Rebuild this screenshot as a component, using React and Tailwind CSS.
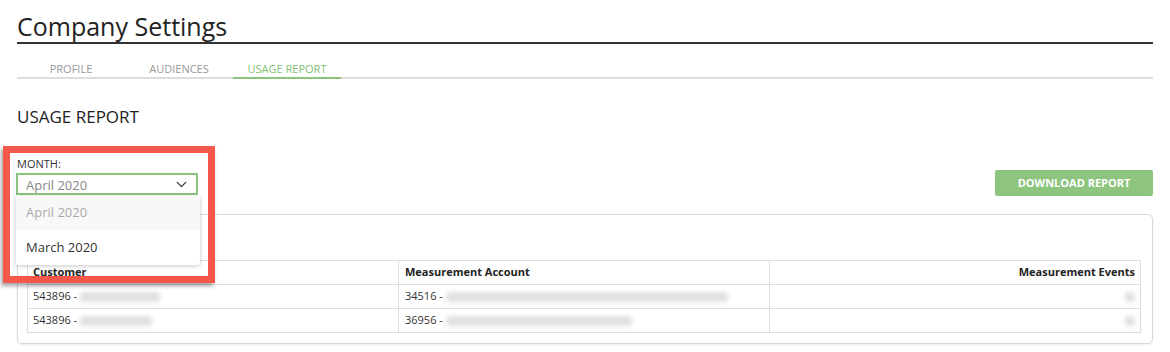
import React from 'react';
import { ChevronDown } from 'lucide-react';

const rows = [
  { customer: '543896 -', custBlur: 'w-[80px]', account: '34516 -', accBlur: 'w-[282px]' },
  { customer: '543896 -', custBlur: 'w-[72px]', account: '36956 -', accBlur: 'w-[186px]' },
];

function Blur({ className }) {
  return <span className={`inline-block h-[10px] align-middle rounded-sm bg-[#e0e0e0] blur-[2px] ${className}`} />;
}

export default function App() {
  const tabs = ['PROFILE', 'AUDIENCES', 'USAGE REPORT'];

  return (
    <div className="relative w-[1170px] h-[352px] bg-white px-[17px] pt-[11px] text-[#333] overflow-hidden" style={{ fontFamily: '"Open Sans", "Liberation Sans", sans-serif' }}>
      <h1 className="text-[25px] leading-[30px] text-[#222] border-b-2 border-[#333] pb-[1px]">Company Settings</h1>

      <div className="mt-[18px] flex border-b-2 border-[#ddd]">
        {tabs.map((t, i) => (
          <div
            key={t}
            className={`w-[108px] flex justify-center text-[11px] leading-[14px] pb-[1px] -mb-[2px] border-b-2 ${i === 2 ? 'text-[#84bf73] border-[#8cc47e]' : 'text-[#999] border-transparent'}`}
          >
            {t}
          </div>
        ))}
      </div>

      <h2 className="mt-[27px] text-[17px] leading-[22px] text-[#222]">USAGE REPORT</h2>

      <div className="mt-[29px] flex items-end justify-between">
        <div>
          <div className="text-[11px] leading-[14px] text-[#333]">MONTH:</div>
          <div className="-ml-px mt-[2px] w-[182px] h-[22px] border-2 border-[#8cc47e] flex items-center justify-between pl-[8px] pr-[6px]">
            <span className="text-[13px] text-[#888] leading-none pt-[2px]">April 2020</span>
            <ChevronDown size={17} strokeWidth={1.75} className="text-[#333]" />
          </div>
        </div>
        <button className="w-[158px] h-[26px] rounded-[2px] bg-[#8dc57f] text-white text-[11px] font-bold mb-[-1px]">DOWNLOAD REPORT</button>
      </div>

      <div className="mt-[19px] h-[130px] border border-[#d8d8d8] rounded-[5px] shadow-[0_1px_2px_rgba(0,0,0,0.08)] pl-[9px] pr-[11px] pt-[45px]">
        <table className="w-full border-collapse text-[11px] table-fixed">
          <thead>
            <tr className="h-[24px]">
              <th className="border border-[#ddd] text-left font-bold px-[5px] text-[#222]">Customer</th>
              <th className="border border-[#ddd] text-left font-bold px-[6px] text-[#222]">Measurement Account</th>
              <th className="border border-[#ddd] text-right font-bold px-[5px] text-[#222]">Measurement Events</th>
            </tr>
          </thead>
          <tbody>
            {rows.map((r, i) => (
              <tr key={i} className="h-[24px]">
                <td className="border border-[#ddd] px-[5px] text-[#333]">
                  {r.customer} <Blur className={r.custBlur} />
                </td>
                <td className="border border-[#ddd] px-[6px] text-[#333]">
                  {r.account} <Blur className={r.accBlur} />
                </td>
                <td className="border border-[#ddd] px-[5px] text-right">
                  <Blur className="w-[10px]" />
                </td>
              </tr>
            ))}
          </tbody>
        </table>
      </div>

      {/* open dropdown menu */}
      <div className="absolute left-[16px] top-[196px] w-[184px] bg-white rounded-b-[3px] shadow-[0_1px_4px_rgba(0,0,0,0.22)] text-[13px]">
        <div className="h-[34px] flex items-center pl-[10px] bg-[#f8f8f8] text-[#aaa]">April 2020</div>
        <div className="h-[35px] flex items-center pl-[10px] text-[#333]">March 2020</div>
      </div>

      {/* annotation highlight */}
      <div className="absolute left-[3px] top-[146px] w-[212px] h-[137px] border-[7px] border-[#f6574b] shadow-[-2px_3px_4px_rgba(0,0,0,0.35)] pointer-events-none" />
    </div>
  );
}
